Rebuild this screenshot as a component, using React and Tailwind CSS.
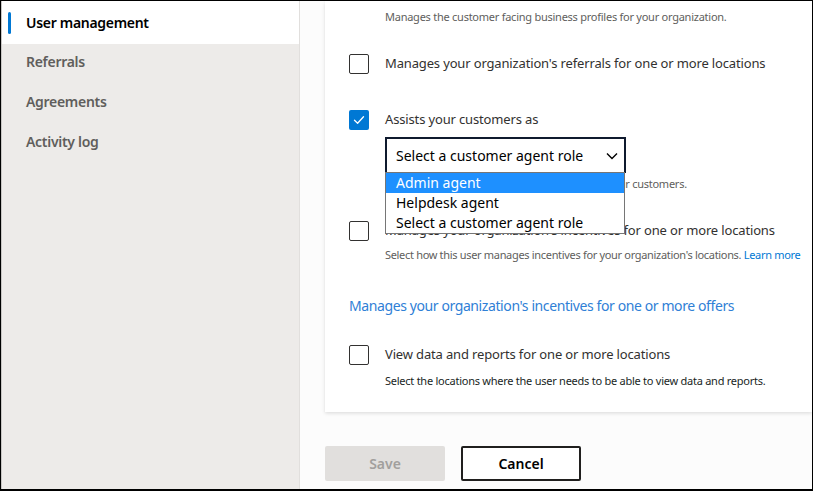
import React from "react";

const font = { fontFamily: '"Noto Sans", "Open Sans", sans-serif' };

const Checkbox = ({ checked }) =>
  checked ? (
    <div className="w-5 h-5 rounded-[2px] bg-[#0078d4] flex items-center justify-center shrink-0">
      <svg width="12" height="12" viewBox="0 0 12 12" fill="none">
        <path d="M1.5 6.3 L4.6 9.2 L10.5 2.8" stroke="white" strokeWidth="1.3" strokeLinecap="round" strokeLinejoin="round" />
      </svg>
    </div>
  ) : (
    <div className="w-5 h-5 rounded-[2px] border border-[#323130] bg-white shrink-0" />
  );

const SideItem = ({ label }) => (
  <div className="h-10 flex items-center pl-6 text-[14px] tracking-[-0.3px] font-semibold text-[#605e5c]">
    {label}
  </div>
);

const App = () => {
  return (
    <div
      className="w-[813px] h-[491px] border-t border-l border-r border-b-2 border-black flex overflow-hidden bg-[#fcfcfc]"
      style={font}
    >
      {/* sidebar */}
      <div className="w-[299px] shrink-0 bg-[#edebe9] border-r border-[#e1dfdd] border-l border-l-[#c8c6c4]">
        <div className="relative h-[43px] bg-white flex items-center pl-6 text-[14px] tracking-[-0.3px] font-semibold text-black">
          <div className="absolute left-[6px] top-[11px] w-[3px] h-[22px] rounded bg-[#0078d4]" />
          User management
        </div>
        <div className="-mt-[3px]">
          <SideItem label="Referrals" />
          <SideItem label="Agreements" />
          <SideItem label="Activity log" />
        </div>
      </div>

      {/* main */}
      <div className="flex-1 pl-[25px] flex flex-col">
        <div className="bg-white shadow-[0_1.6px_3.6px_rgba(0,0,0,0.13),0_0.3px_0.9px_rgba(0,0,0,0.11)] pl-6 pt-[8px] pb-[23px] relative">
          <div className="pl-9 text-[11px] tracking-[-0.25px] leading-4 text-[#605e5c]">
            Manages the customer facing business profiles for your organization.
          </div>

          <div className="mt-[29px] flex items-center gap-4 h-5">
            <Checkbox />
            <span className="text-[13px] tracking-[-0.15px] text-[#323130]">
              Manages your organization's referrals for one or more locations
            </span>
          </div>

          <div className="mt-9 flex items-center gap-4 h-5">
            <Checkbox checked />
            <span className="text-[13px] tracking-[-0.15px] text-[#323130]">Assists your customers as</span>
          </div>

          <div className="ml-9 mt-[7px] relative w-[241px]">
            <div className="h-9 border-2 border-b border-[#0f1a2e] flex items-center justify-between pl-[9px] pr-[6px] text-[14px] text-black">
              <span>Select a customer agent role</span>
              <svg width="12" height="8" viewBox="0 0 12 8" fill="none">
                <path d="M1 1.5 L6 6.5 L11 1.5" stroke="#000" strokeWidth="1.4" />
              </svg>
            </div>
            <div className="absolute left-0 top-[35px] w-[240px] border border-[#767676] bg-white z-10 text-[14px] leading-5 text-black">
              <div className="bg-[#1e90ff] text-white pl-[10px]">Admin agent</div>
              <div className="pl-[10px]">Helpdesk agent</div>
              <div className="pl-[10px]">Select a customer agent role</div>
            </div>
          </div>

          <div className="pl-9 mt-[3px] text-[11px] tracking-[-0.25px] leading-4 text-[#605e5c]">
            Select the type of agent role this user has for your customers.
          </div>

          <div className="mt-[29px] flex items-center gap-4 h-5">
            <Checkbox />
            <span className="text-[13px] tracking-[-0.15px] text-[#323130]">
              Manages your organization's incentives for one or more locations
            </span>
          </div>
          <div className="pl-9 mt-[6px] text-[11px] tracking-[-0.32px] leading-4 text-[#605e5c] whitespace-nowrap">
            Select how this user manages incentives for your organization's locations.{" "}
            <span className="text-[#0078d4]">Learn more</span>
          </div>

          <div className="mt-[33px] text-[14px] tracking-[-0.4px] leading-5 text-[#2f80d6]">
            Manages your organization's incentives for one or more offers
          </div>

          <div className="mt-[29px] flex items-center gap-4 h-5">
            <Checkbox />
            <span className="text-[13px] tracking-[-0.15px] text-[#323130]">
              View data and reports for one or more locations
            </span>
          </div>
          <div className="pl-9 mt-2 text-[11px] tracking-[-0.25px] leading-4 text-[#201f1e]">
            Select the locations where the user needs to be able to view data and reports.
          </div>
        </div>

        <div className="mt-[34px] flex gap-4">
          <button className="w-[120px] h-[35px] rounded-[2px] bg-[#e1dfdd] text-[#a19f9d] text-[14px] font-semibold">
            Save
          </button>
          <button className="w-[120px] h-[35px] rounded-[2px] border-2 border-[#201f1e] bg-white text-black text-[14px] font-semibold">
            Cancel
          </button>
        </div>
      </div>
    </div>
  );
};

export default App;
